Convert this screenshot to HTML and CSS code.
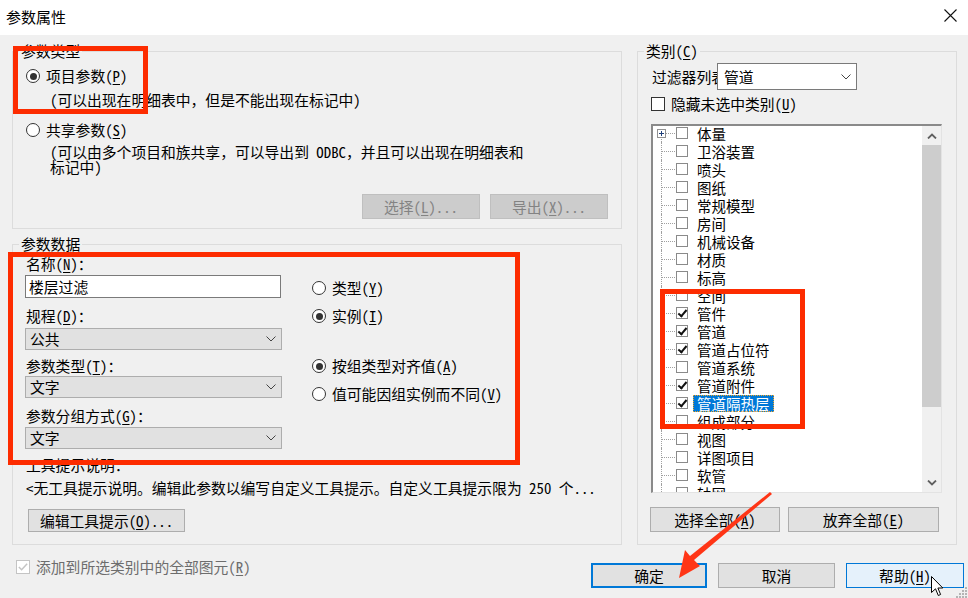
FILE: index.html
```html
<!DOCTYPE html>
<html lang="zh-CN">
<head>
<meta charset="utf-8">
<title>参数属性</title>
<link rel="stylesheet" href="styles.css">
</head>
<body>
<div class="dialog">
  <div class="titlebar">
    <span class="title">参数属性</span>
    <svg class="close" viewBox="0 0 13 13"><path d="M0.5 0.5 L12.5 12.5 M12.5 0.5 L0.5 12.5" stroke="#111" stroke-width="1.1" fill="none"/></svg>
  </div>

  <div class="content">
    <div class="columns">
      <div class="leftcol">
        <fieldset class="group g-type">
          <legend>参数类型</legend>
          <div class="inner type-inner">
            <div class="radio-row"><span class="radio checked"></span><span>项目参数(<u>P</u>)</span></div>
            <div class="desc d1">(可以出现在明细表中，但是不能出现在标记中)</div>
            <div class="radio-row r2"><span class="radio"></span><span>共享参数(<u>S</u>)</span></div>
            <div class="desc d2">(可以由多个项目和族共享，可以导出到 ODBC，并且可以出现在明细表和<br>标记中)</div>
            <div class="btn-row">
              <div class="btn disabled w118">选择(<u>L</u>)...</div>
              <div class="btn disabled w118">导出(<u>X</u>)...</div>
            </div>
          </div>
        </fieldset>

        <fieldset class="group g-data">
          <legend>参数数据</legend>
          <div class="inner data-inner">
            <div class="data-grid">
              <div class="data-left">
                <div class="lbl l1">名称(<u>N</u>)：</div>
                <div class="textbox">楼层过滤</div>
                <div class="lbl l2">规程(<u>D</u>)：</div>
                <div class="select s1"><span>公共</span><svg class="chev" viewBox="0 0 10 6"><path d="M0.5 0.5 L5 5 L9.5 0.5" stroke="#444" fill="none"/></svg></div>
                <div class="lbl l3">参数类型(<u>T</u>)：</div>
                <div class="select s2"><span>文字</span><svg class="chev" viewBox="0 0 10 6"><path d="M0.5 0.5 L5 5 L9.5 0.5" stroke="#444" fill="none"/></svg></div>
                <div class="lbl l4">参数分组方式(<u>G</u>)：</div>
                <div class="select s3"><span>文字</span><svg class="chev" viewBox="0 0 10 6"><path d="M0.5 0.5 L5 5 L9.5 0.5" stroke="#444" fill="none"/></svg></div>
              </div>
              <div class="data-right">
                <div class="radio-row rr1"><span class="radio"></span><span>类型(<u>Y</u>)</span></div>
                <div class="radio-row rr2"><span class="radio checked"></span><span>实例(<u>I</u>)</span></div>
                <div class="radio-row rr3"><span class="radio checked"></span><span>按组类型对齐值(<u>A</u>)</span></div>
                <div class="radio-row rr4"><span class="radio"></span><span>值可能因组实例而不同(<u>V</u>)</span></div>
              </div>
            </div>
            <div class="lbl tip-lbl">工具提示说明：</div>
            <div class="tip-text">&lt;无工具提示说明。编辑此参数以编写自定义工具提示。自定义工具提示限为 250 个...</div>
            <div class="btn tip-btn">编辑工具提示(<u>O</u>)...</div>
          </div>
        </fieldset>
      </div>

      <fieldset class="group g-cat">
        <legend>类别(<u>C</u>)</legend>
        <div class="inner cat-inner">
          <div class="filter-row">
            <span class="filter-lbl">过滤器列表</span>
            <div class="fselect"><span>管道</span><svg class="chev" viewBox="0 0 10 6"><path d="M0.5 0.5 L5 5 L9.5 0.5" stroke="#444" fill="none"/></svg></div>
          </div>
          <div class="check-row hide-row"><span class="cbox big"></span><span>隐藏未选中类别(<u>U</u>)</span></div>
          <div class="treebox">
            <div class="tree">
              <div class="trow first"><span class="tl"><span class="plus"></span></span><span class="cb"></span><span class="tx">体量</span></div>
              <div class="trow"><span class="tl"></span><span class="cb"></span><span class="tx">卫浴装置</span></div>
              <div class="trow"><span class="tl"></span><span class="cb"></span><span class="tx">喷头</span></div>
              <div class="trow"><span class="tl"></span><span class="cb"></span><span class="tx">图纸</span></div>
              <div class="trow"><span class="tl"></span><span class="cb"></span><span class="tx">常规模型</span></div>
              <div class="trow"><span class="tl"></span><span class="cb"></span><span class="tx">房间</span></div>
              <div class="trow"><span class="tl"></span><span class="cb"></span><span class="tx">机械设备</span></div>
              <div class="trow"><span class="tl"></span><span class="cb"></span><span class="tx">材质</span></div>
              <div class="trow"><span class="tl"></span><span class="cb"></span><span class="tx">标高</span></div>
              <div class="trow"><span class="tl"></span><span class="cb"></span><span class="tx">空间</span></div>
              <div class="trow"><span class="tl"></span><span class="cb on"></span><span class="tx">管件</span></div>
              <div class="trow"><span class="tl"></span><span class="cb on"></span><span class="tx">管道</span></div>
              <div class="trow"><span class="tl"></span><span class="cb on"></span><span class="tx">管道占位符</span></div>
              <div class="trow"><span class="tl"></span><span class="cb"></span><span class="tx">管道系统</span></div>
              <div class="trow"><span class="tl"></span><span class="cb on"></span><span class="tx">管道附件</span></div>
              <div class="trow"><span class="tl"></span><span class="cb on"></span><span class="tx sel">管道隔热层</span></div>
              <div class="trow"><span class="tl"></span><span class="cb"></span><span class="tx">组成部分</span></div>
              <div class="trow"><span class="tl"></span><span class="cb"></span><span class="tx">视图</span></div>
              <div class="trow"><span class="tl"></span><span class="cb"></span><span class="tx">详图项目</span></div>
              <div class="trow"><span class="tl"></span><span class="cb"></span><span class="tx">软管</span></div>
              <div class="trow"><span class="tl"></span><span class="cb"></span><span class="tx">轴网</span></div>
            </div>
            <div class="vscroll">
              <div class="sb-btn"><svg viewBox="0 0 10 6"><path d="M1 5.5 L5 1.5 L9 5.5" stroke="#606060" stroke-width="1.8" fill="none"/></svg></div>
              <div class="sb-thumb"></div>
              <div class="sb-track"></div>
              <div class="sb-btn"><svg viewBox="0 0 10 6"><path d="M1 0.5 L5 4.5 L9 0.5" stroke="#606060" stroke-width="1.8" fill="none"/></svg></div>
            </div>
          </div>
          <div class="cat-btns">
            <div class="btn w130">选择全部(<u>A</u>)</div>
            <div class="btn w151">放弃全部(<u>E</u>)</div>
          </div>
        </div>
      </fieldset>
    </div>

    <div class="footer">
      <div class="check-row dis"><span class="cbox dis-box"><svg viewBox="0 0 13 13"><path d="M2 6.5 L5 9.5 L11 3" stroke="#c4c4c4" stroke-width="1.6" fill="none"/></svg></span><span>添加到所选类别中的全部图元(<u>R</u>)</span></div>
      <div class="foot-btns">
        <div class="btn default w116">确定</div>
        <div class="btn w117">取消</div>
        <div class="btn hover w118">帮助(<u>H</u>)</div>
      </div>
    </div>
  </div>

  <div class="mark m1"></div>
  <div class="mark m2"></div>
  <div class="mark m3"></div>
  <svg class="arrow" viewBox="0 0 110 95" width="110" height="95"><polygon points="100,4 20,68 15,62 9,90 30,78 24,72 102,6" fill="#ff3516"/></svg>
  <svg class="cursor" viewBox="0 0 13 21" width="13" height="21"><path d="M0.5 0.5 L0.5 16.5 L4.5 12.8 L7.3 19.5 L9.6 18.5 L6.9 12 L11.8 12 Z" fill="#fff" stroke="#000" stroke-width="1"/></svg>
  <svg class="grip" viewBox="0 0 12 12" width="12" height="12"><g fill="#b4b4b4"><rect x="9" y="1" width="2" height="2"/><rect x="6" y="4" width="2" height="2"/><rect x="9" y="4" width="2" height="2"/><rect x="3" y="7" width="2" height="2"/><rect x="6" y="7" width="2" height="2"/><rect x="9" y="7" width="2" height="2"/><rect x="0" y="10" width="2" height="2"/><rect x="3" y="10" width="2" height="2"/><rect x="6" y="10" width="2" height="2"/><rect x="9" y="10" width="2" height="2"/></g></svg>
</div>
</body>
</html>
```

FILE: styles.css
```css
* { box-sizing: border-box; }
html, body { margin: 0; padding: 0; }
body {
  width: 968px; height: 598px; overflow: hidden;
  background: #f0f0f0;
  font-family: "Noto Sans Mono CJK SC", "Noto Sans CJK SC", "Noto Sans", sans-serif;
  font-size: 14.8px; line-height: 18px; color: #000;
}
u { text-decoration: underline; text-underline-offset: 2px; }
.dialog { position: relative; width: 968px; height: 598px; background: #f0f0f0; overflow: hidden; }

.titlebar {
  height: 35px; background: #fff;
  display: flex; align-items: center; justify-content: space-between;
  padding: 0 11px 0 6px;
}
.title { font-size: 15px; margin-top: -2px; }
.close { width: 13px; height: 13px; margin-top: -4px; }

.content { padding: 7px 4px 0 12px; }
.columns { display: flex; gap: 15px; align-items: stretch; }
.leftcol { width: 610px; display: flex; flex-direction: column; }

.group { margin: 0; border: 1px solid #dcdcdc; padding: 0 0 12px 0; min-width: 0; }
.group legend { padding: 0 2px; margin-left: 6px; line-height: 18px; }
.g-type { padding-bottom: 9px; }
.g-data { margin-top: 6px; flex: 1; }
.g-cat { width: 320px; }

.radio-row { display: flex; align-items: center; gap: 6px; height: 18px; }
.radio {
  width: 14px; height: 14px; border-radius: 50%;
  border: 1px solid #333; background: #fff; position: relative; flex: none;
}
.radio.checked::after {
  content: ""; position: absolute; left: 2.5px; top: 2.5px;
  width: 7px; height: 7px; border-radius: 50%; background: #333;
}

.type-inner { padding: 7px 13px 0 13px; }
.desc { margin-left: 24px; }
.d1 { margin-top: 6px; }
.r2 { margin-top: 12px; }
.d2 { margin-top: 5px; line-height: 15px; }
.btn-row { display: flex; justify-content: flex-end; gap: 10px; margin-top: 20px; }

.btn {
  height: 25px; border: 1px solid #adadad; background: #e1e1e1;
  display: flex; align-items: center; justify-content: center; white-space: nowrap;
}
.btn.disabled { background: #cccccc; border-color: #bfbfbf; color: #838383; }
.btn.default { border: 2px solid #0078d7; }
.btn.hover { background: #e5f1fb; border-color: #0078d7; }
.w116 { width: 116px; } .w117 { width: 117px; } .w118 { width: 118px; }
.w130 { width: 130px; } .w151 { width: 151px; }

.data-inner { padding: 0 13px 0 12px; }
.data-grid { display: flex; }
.data-left { width: 257px; display: flex; flex-direction: column; }
.data-right { margin-left: 30px; display: flex; flex-direction: column; }
.lbl { margin-left: 1px; height: 18px; }
.l1 { margin-top: 2px; }
.textbox {
  margin-top: 2px; height: 23px; width: 256px;
  border: 1px solid #7a7a7a; background: #fff; padding-left: 3px;
  display: flex; align-items: center;
}
.l2 { margin-top: 9px; }
.select {
  height: 22px; width: 257px; border: 1px solid #adadad; background: #e1e1e1;
  display: flex; align-items: center; justify-content: space-between;
  padding: 0 5px 0 4px;
}
.chev { width: 10px; height: 6px; }
.s1 { margin-top: 3px; }
.l3 { margin-top: 7px; }
.s2 { margin-top: 1px; }
.l4 { margin-top: 9px; }
.s3 { margin-top: 2px; }
.rr1 { margin-top: 26px; }
.rr2 { margin-top: 10px; }
.rr3 { margin-top: 32px; }
.rr4 { margin-top: 10px; }
.tip-lbl { margin-top: 7px; }
.tip-text { margin-top: 5px; margin-left: 1px; white-space: nowrap; }
.tip-btn { margin-top: 12px; margin-left: 3px; width: 157px; height: 23px; }

.cat-inner { padding: 0 14px 0 13px; }
.filter-row { display: flex; align-items: center; margin-top: 3px; height: 27px; }
.filter-lbl { width: 65px; margin-left: 1px; overflow: hidden; white-space: nowrap; }
.fselect {
  width: 140px; height: 27px; border: 1px solid #7a7a7a; background: #fff;
  display: flex; align-items: center; justify-content: space-between;
  padding: 0 5px 0 6px;
}
.check-row { display: flex; align-items: center; gap: 6px; height: 18px; }
.hide-row { margin-top: 5px; }
.cbox { width: 14px; height: 14px; border: 1px solid #333; background: #fff; flex: none; }
.treebox {
  margin-top: 11px; height: 369px; width: 291px;
  border-top: 2px solid #8a8a8a; border-left: 2px solid #8a8a8a;
  border-right: 1px solid #e3e3e3; border-bottom: 1px solid #e3e3e3;
  background: #fff; display: flex; overflow: hidden;
}
.tree { flex: 1; overflow: hidden; }
.trow { height: 18px; display: flex; align-items: center; position: relative; white-space: nowrap; }
.trow:first-child { margin-top: -2px; }
.tl { width: 23px; height: 18px; position: relative; flex: none; }
.tl::before {
  content: ""; position: absolute; left: 8px; top: 0; bottom: 0;
  border-left: 1px dotted #a0a0a0;
}
.first .tl::before { top: 9px; }
.tl::after {
  content: ""; position: absolute; left: 9px; top: 9px; width: 13px;
  border-top: 1px dotted #a0a0a0;
}
.plus {
  position: absolute; left: 4px; top: 5px; width: 9px; height: 9px; z-index: 1;
  border: 1px solid #919191; background: #fff;
}
.plus::before { content: ""; position: absolute; left: 1px; top: 3px; width: 5px; height: 1px; background: #1f3f7a; }
.plus::after { content: ""; position: absolute; left: 3px; top: 1px; width: 1px; height: 5px; background: #1f3f7a; }
.cb { width: 12px; height: 12px; border: 1px solid #8a8a8a; background: #fff; flex: none; position: relative; }
.cb.on::after {
  content: ""; position: absolute; left: 3px; top: 0px; width: 3px; height: 7px;
  border-right: 2px solid #111; border-bottom: 2px solid #111; transform: rotate(40deg);
}
.tx { margin-left: 5px; padding: 0 4px; height: 17px; line-height: 17px; font-size: 14.5px; }
.tx.sel { background: #0078d7; color: #fff; outline: 1px dotted #f5a623; outline-offset: -1px; }

.vscroll { width: 19px; background: #f0f0f0; display: flex; flex-direction: column; flex: none; }
.sb-btn { height: 19px; display: flex; align-items: center; justify-content: center; flex: none; }
.sb-btn svg { width: 10px; height: 6px; }
.sb-thumb { height: 262px; background: #cdcdcd; flex: none; }
.sb-track { flex: 1; }

.cat-btns { display: flex; gap: 8px; margin-top: 14px; margin-left: -1px; }

.footer { display: flex; align-items: flex-start; margin-top: 18px; }
.check-row.dis { margin-top: -5px; margin-left: 4px; color: #6d6d6d; gap: 6px; }
.dis-box { border-color: #c4c4c4; width: 14px; height: 14px; }
.dis-box svg { width: 12px; height: 12px; display: block; }
.foot-btns { margin-left: auto; display: flex; gap: 11px; }

.mark { position: absolute; border: 5px solid #fd2c00; }
.m1 { left: 13px; top: 46px; width: 135px; height: 68px; }
.m2 { left: 8px; top: 252px; width: 512px; height: 213px; }
.m3 { left: 660px; top: 289px; width: 145px; height: 140px; }
.arrow { position: absolute; left: 670px; top: 488px; }
.cursor { position: absolute; left: 931px; top: 576px; }
.grip { position: absolute; right: 0; bottom: 0; }
```
